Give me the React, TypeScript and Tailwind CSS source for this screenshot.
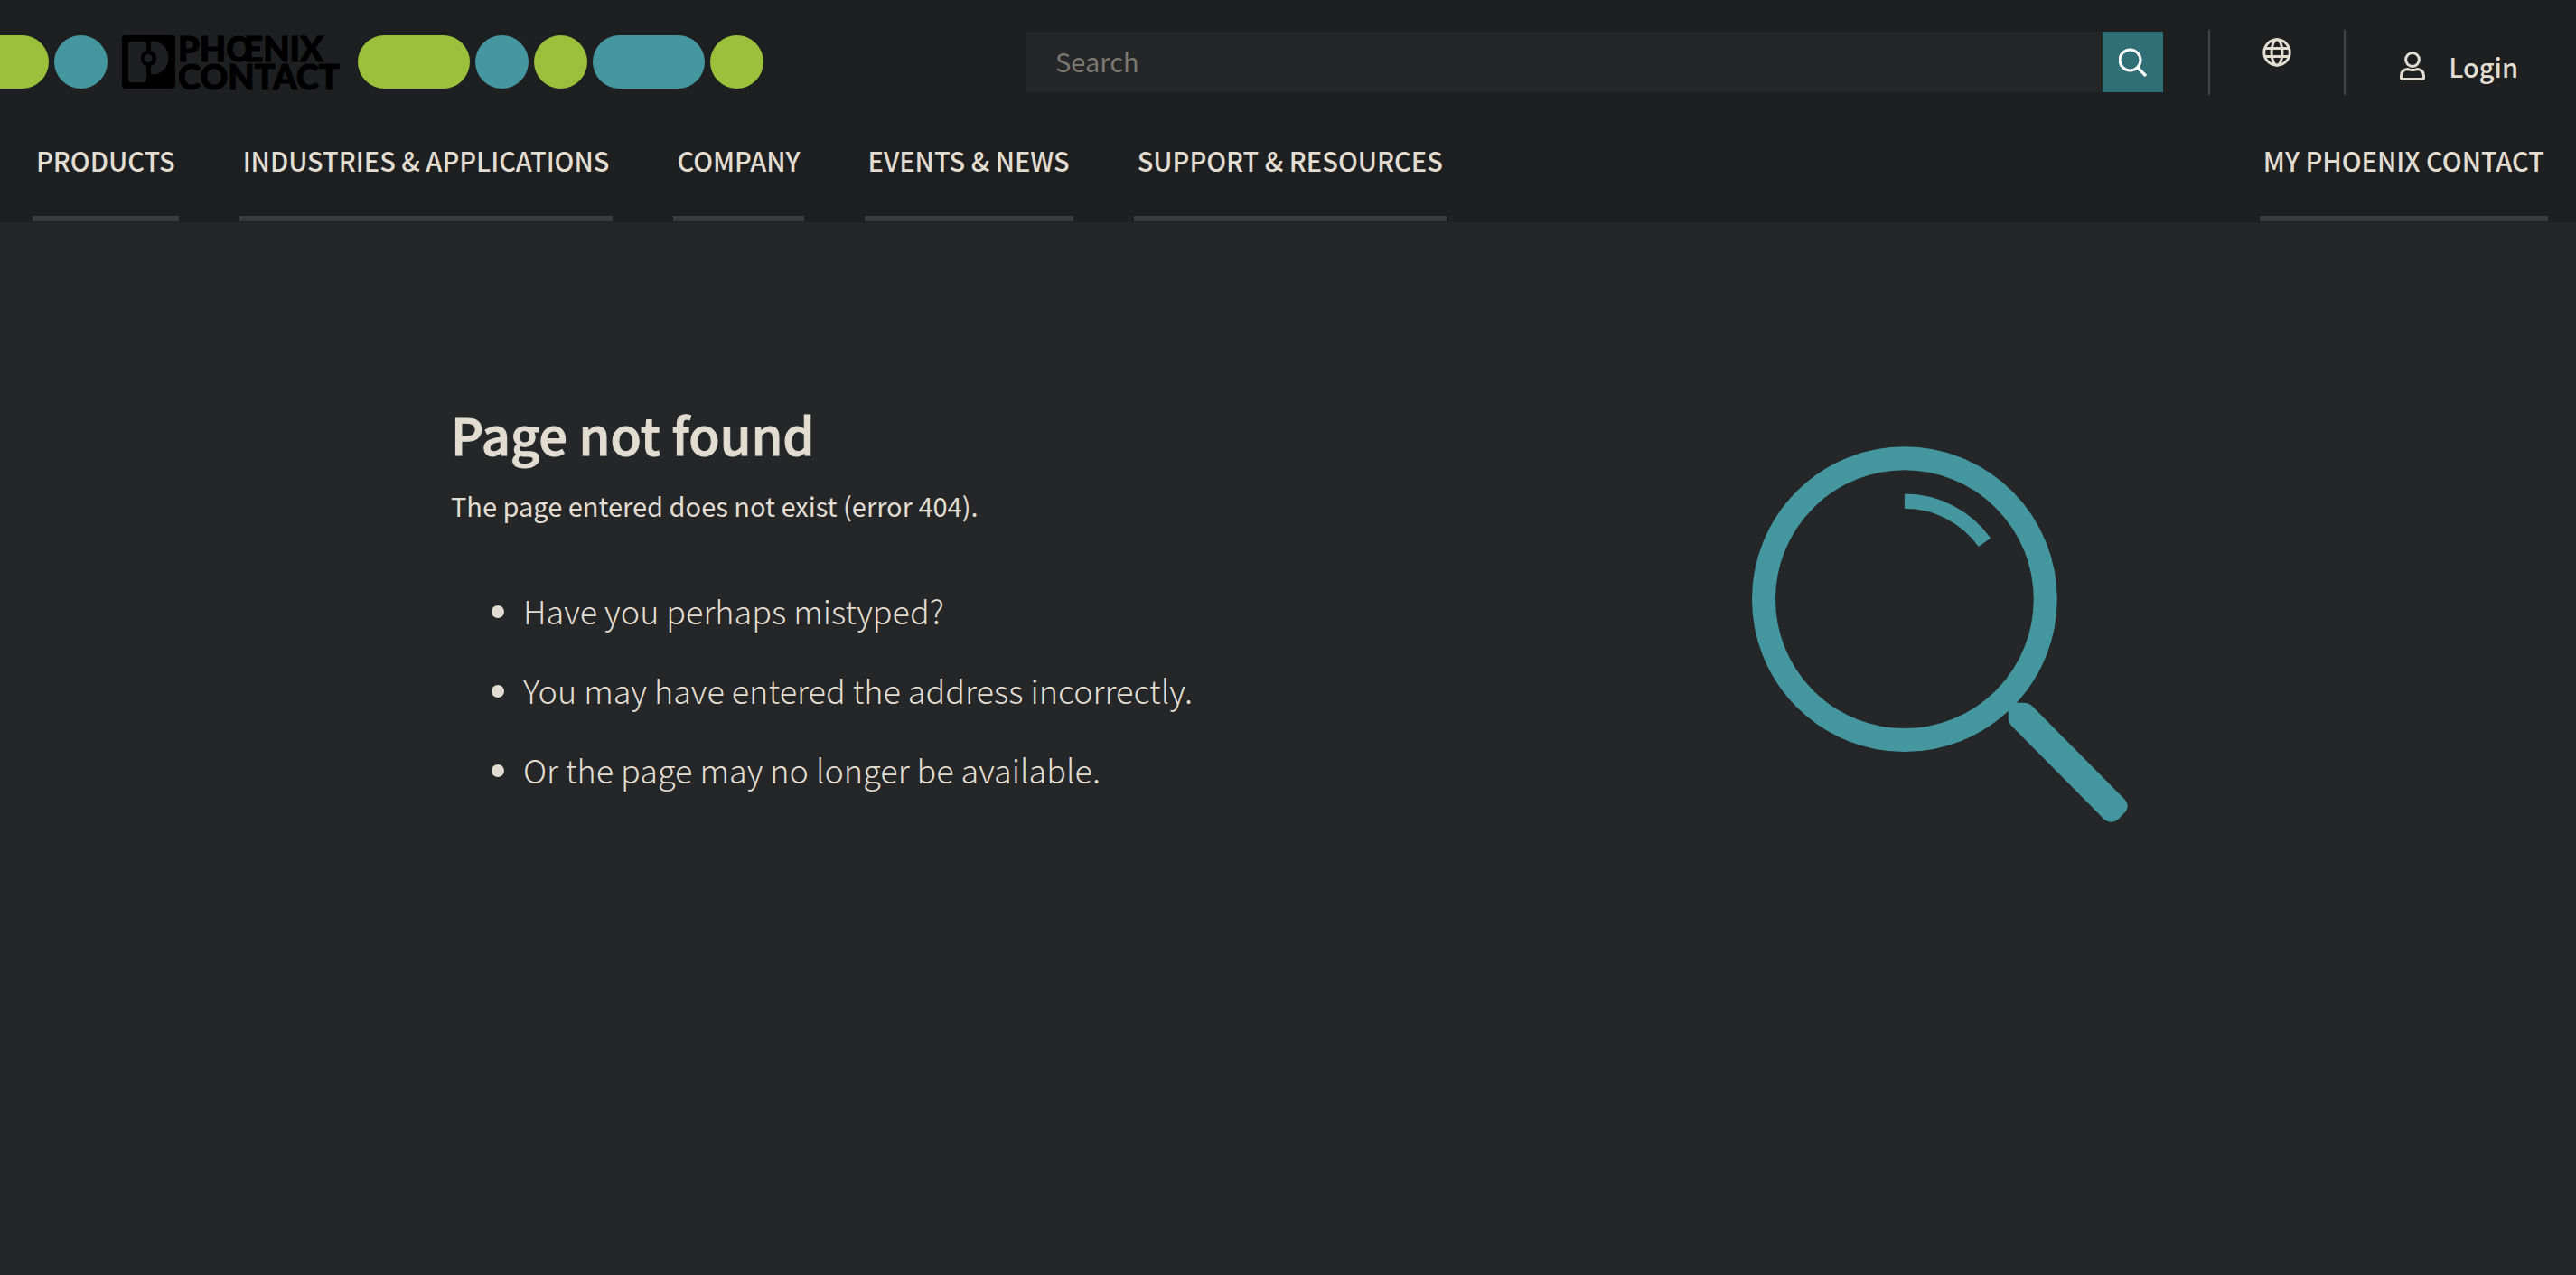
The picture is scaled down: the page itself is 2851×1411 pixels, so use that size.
const navItems = [
  'Products',
  'Industries & Applications',
  'Company',
  'Events & News',
  'Support & Resources',
];

const hints = [
  'Have you perhaps mistyped?',
  'You may have entered the address incorrectly.',
  'Or the page may no longer be available.',
];

function Logo() {
  return (
    <a href="#" aria-label="Phoenix Contact home" className="flex h-[59px] items-center gap-[3px] text-black">
      <svg viewBox="0 0 59 59" className="size-[59px] shrink-0" aria-hidden="true">
        <path
          fillRule="evenodd"
          fill="currentColor"
          d="M4 0H55Q59 0 59 4V55Q59 59 55 59H4Q0 59 0 55V4Q0 0 4 0ZM10 7Q7 7 7 10V49Q7 52 10 52H24Q27 52 27 49V34A9 9 0 0 1 27 17V10Q27 7 24 7ZM32 7V17A9 9 0 0 1 32 34V43Q36 44 41 42A19 19 0 0 0 41 8Q37 6 32 7ZM29 21A4.5 4.5 0 1 0 29 30A4.5 4.5 0 1 0 29 21Z"
        />
      </svg>
      <span className="font-['Lato'] text-[38px] font-black leading-[31px] [-webkit-text-stroke:1px_black]">
        PHŒNIX
        <br />
        CONTACT
      </span>
    </a>
  );
}

function NavLink({ label }: { label: string }) {
  return (
    <a
      href="#"
      className="flex h-[101px] flex-col border-b-[6px] border-[#3a3c3e] px-1 pt-[15px] text-[29px] font-medium uppercase leading-[36px] whitespace-nowrap"
    >
      {label}
    </a>
  );
}

export default function App() {
  return (
    <div className="flex min-h-screen flex-col bg-[#242628] font-['Noto_Sans_CJK_SC','Noto_Sans',sans-serif] text-[#e3ddd1]">
      <header className="flex flex-col bg-[#1d1f20]">
        <div className="flex items-start pt-[33px]">
          <div className="flex shrink-0 items-center pt-[6px]">
            <span className="h-[59px] w-[54px] rounded-r-full bg-[#9bc03b]" />
            <span className="ml-[6px] size-[59px] rounded-full bg-[#44979f]" />
            <div className="ml-4 w-[261px]">
              <Logo />
            </div>
            <div className="flex gap-[6px]">
              <span className="h-[59px] w-[124px] rounded-full bg-[#9bc03b]" />
              <span className="size-[59px] rounded-full bg-[#44979f]" />
              <span className="size-[59px] rounded-full bg-[#9bc03b]" />
              <span className="h-[59px] w-[124px] rounded-full bg-[#44979f]" />
              <span className="size-[59px] rounded-full bg-[#9bc03b]" />
            </div>
          </div>
          <form className="mt-[2px] ml-[291px] flex h-[67px] flex-1" role="search">
            <input
              type="search"
              aria-label="Search"
              placeholder="Search"
              className="min-w-0 flex-1 bg-[#242628] px-8 pb-[2px] text-[29px] outline-none placeholder:text-[#7c7872]"
            />
            <button type="submit" aria-label="Submit search" className="flex w-[67px] items-center justify-center bg-[#316f77] text-white">
              <svg viewBox="0 0 32 32" className="size-8" fill="none" stroke="currentColor" aria-hidden="true">
                <circle cx="12.5" cy="13.5" r="11.5" strokeWidth="3" />
                <path d="M20.5 21.5 30 31" strokeWidth="3.2" />
              </svg>
            </button>
          </form>
          <div className="ml-[50px] flex h-[72px] w-[152px] justify-center border-x-2 border-[#434547] pt-[9px]">
            <button type="button" aria-label="Choose language" className="size-8">
              <svg viewBox="0 0 32 32" className="size-8" fill="none" stroke="currentColor" strokeWidth="3" aria-hidden="true">
                <circle cx="16" cy="16" r="14.2" />
                <ellipse cx="16" cy="16" rx="6" ry="14.2" />
                <path d="M2 11.6H30M2 20.6H30" />
              </svg>
            </button>
          </div>
          <button type="button" className="mr-16 ml-[60px] flex h-[72px] items-center gap-[26px] pt-2 text-[29px] font-medium leading-[36px]">
            <svg viewBox="0 0 28 32" className="h-8 w-7" fill="none" stroke="currentColor" strokeWidth="3" aria-hidden="true">
              <circle cx="14" cy="9" r="7.4" />
              <path d="M9 19.6Q1.5 20 1.5 27V29Q1.5 30.5 3 30.5H25Q26.5 30.5 26.5 29V27Q26.5 20 19 19.6Q14 21.6 9 19.6Z" />
            </svg>
            Login
          </button>
        </div>
        <nav aria-label="Main" className="mt-[39px] mb-px flex justify-between pr-[31px] pl-9">
          <div className="flex gap-[67px]">
            {navItems.map((item) => (
              <NavLink key={item} label={item} />
            ))}
          </div>
          <NavLink label="My Phoenix Contact" />
        </nav>
      </header>
      <main className="flex items-start justify-between pt-[202px] pr-[17.4%] pl-[17.5%]">
        <div>
          <h1 className="text-[56px] font-medium leading-[64px] [-webkit-text-stroke:1px_#e3ddd1]">Page not found</h1>
          <p className="mt-[27px] text-[29px] leading-[40px]">The page entered does not exist (error 404).</p>
          <ul className="mt-[72px] flex list-disc flex-col gap-10 pl-20 text-[36px] font-light leading-[48px]">
            {hints.map((hint) => (
              <li key={hint}>{hint}</li>
            ))}
          </ul>
        </div>
        <svg viewBox="120 101 1249 1250" className="mt-[46px] w-[416px] text-[#44979f]" aria-hidden="true">
          <circle cx="627" cy="609" r="468" fill="none" stroke="currentColor" strokeWidth="78" />
          <path d="M627 283A326 326 0 0 1 893 420" fill="none" stroke="currentColor" strokeWidth="49" />
          <path
            fill="currentColor"
            d="M990 953H1022Q1038 953 1050 963L1359 1274Q1376 1294 1362 1314L1336 1341Q1314 1358 1291 1341L984 1031Q972 1019 972 1003V970Z"
          />
        </svg>
      </main>
    </div>
  );
}
